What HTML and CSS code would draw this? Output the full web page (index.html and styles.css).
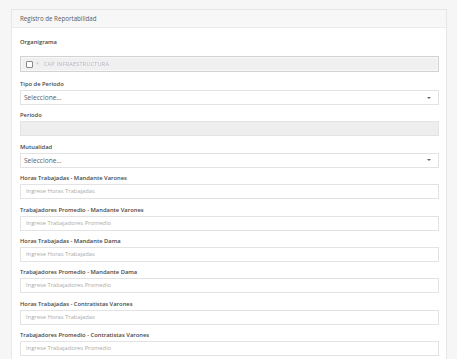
FILE: index.html
```html
<!DOCTYPE html>
<html lang="es">
<head>
<meta charset="utf-8">
<link rel="stylesheet" href="styles.css">
</head>
<body>
<div class="panel">
  <div class="panel-heading">Registro de Reportabilidad</div>
  <div class="panel-body">
    <div class="group group-org">
      <label class="lbl lbl-org">Organigrama</label>
      <div class="org-box">
        <span class="chk"></span>
        <span class="star">*</span>
        <span class="org-name">CAP INFRAESTRUCTURA</span>
      </div>
    </div>
    <div class="group">
      <label class="lbl">Tipo de Periodo</label>
      <div class="ctrl select"><span>Seleccione...</span><i class="caret"></i></div>
    </div>
    <div class="group">
      <label class="lbl">Periodo</label>
      <div class="ctrl disabled"></div>
    </div>
    <div class="group">
      <label class="lbl">Mutualidad</label>
      <div class="ctrl select"><span>Seleccione...</span><i class="caret"></i></div>
    </div>
    <div class="group">
      <label class="lbl">Horas Trabajadas - Mandante Varones</label>
      <div class="ctrl ph">Ingrese Horas Trabajadas</div>
    </div>
    <div class="group">
      <label class="lbl">Trabajadores Promedio - Mandante Varones</label>
      <div class="ctrl ph">Ingrese Trabajadores Promedio</div>
    </div>
    <div class="group">
      <label class="lbl">Horas Trabajadas - Mandante Dama</label>
      <div class="ctrl ph">Ingrese Horas Trabajadas</div>
    </div>
    <div class="group">
      <label class="lbl">Trabajadores Promedio - Mandante Dama</label>
      <div class="ctrl ph">Ingrese Trabajadores Promedio</div>
    </div>
    <div class="group">
      <label class="lbl">Horas Trabajadas - Contratistas Varones</label>
      <div class="ctrl ph">Ingrese Horas Trabajadas</div>
    </div>
    <div class="group">
      <label class="lbl">Trabajadores Promedio - Contratistas Varones</label>
      <div class="ctrl ph">Ingrese Trabajadores Promedio</div>
    </div>
  </div>
</div>
</body>
</html>
```
FILE: styles.css
```css
html, body {
  margin: 0;
  padding: 0;
  background: #f6f6f6;
  font-family: "Open Sans", "Liberation Sans", sans-serif;
  font-size: 6px;
  color: #555;
}
body {
  padding: 9px 11px 0 11px;
  height: 359px;
  box-sizing: border-box;
  overflow: hidden;
}
.panel {
  width: 436px;
  background: #fff;
  border: 1px solid #e6e6e6;
  box-sizing: border-box;
}
.panel-heading {
  height: 18px;
  line-height: 17px;
  padding-left: 8px;
  background: #f7f7f7;
  border-bottom: 1px solid #ebebeb;
  box-sizing: border-box;
  color: #5a5a5a;
  font-size: 6.2px;
}
.panel-body {
  padding: 9px 7px 0 8px;
}
.group {
  margin-bottom: 5.4px;
}
.group-org {
  margin-bottom: 7px;
}
.lbl {
  display: block;
  height: 10px;
  line-height: 10px;
  margin-bottom: 1px;
  font-weight: 600;
  font-size: 5.8px;
  color: #474747;
}
.lbl-org {
  margin-bottom: 9px;
}
.ctrl {
  height: 15px;
  border: 1px solid #e3e3e3;
  box-sizing: border-box;
  padding: 0 5px;
  line-height: 13px;
  color: #5a5a5a;
  background: #fff;
  display: flex;
  align-items: center;
}
.ph {
  color: #ababab;
  font-size: 5.8px;
}
.select {
  justify-content: space-between;
  padding: 0 7px 0 3px;
  font-size: 6.6px;
}
.caret {
  width: 0;
  height: 0;
  border-left: 2px solid transparent;
  border-right: 2px solid transparent;
  border-top: 2px solid #666;
}
.disabled {
  background: #eeeeee;
}
.org-box {
  height: 16px;
  border: 1px solid #d2d2d2;
  box-shadow: inset 0 0 0 1px #f8f8f8;
  background: #f0f0f0;
  box-sizing: border-box;
  display: flex;
  align-items: center;
  padding-left: 5px;
  gap: 3px;
}
.chk {
  width: 5px;
  height: 5px;
  border: 1px solid #888;
  background: #fff;
  border-radius: 1px;
}
.star {
  color: #bbb;
  font-size: 5px;
}
.org-name {
  color: #b4b4c4;
  font-size: 5.4px;
  letter-spacing: 0.3px;
  filter: blur(0.6px);
  margin-left: 2px;
}
```
